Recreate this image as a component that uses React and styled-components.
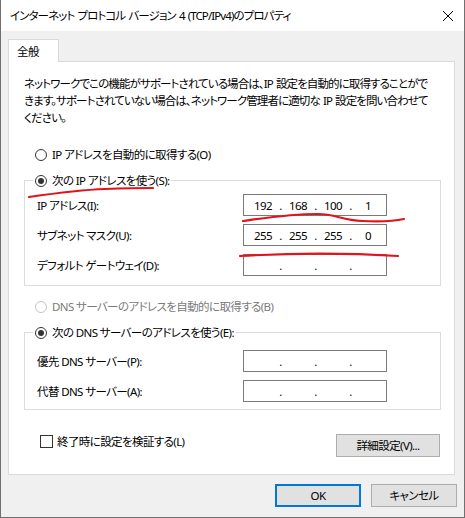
import React from 'react';
import styled, { createGlobalStyle } from 'styled-components';

const GlobalStyle = createGlobalStyle`
  html, body {
    margin: 0;
    padding: 0;
    background: #ffffff;
  }
  body {
    font-family: "Noto Sans", "Noto Sans CJK JP", sans-serif;
    font-size: 12px;
    color: #000;
  }
  * {
    box-sizing: border-box;
  }
`;

const FONT = `"Noto Sans", "Noto Sans CJK JP", sans-serif`;

const Window = styled.div`
  position: relative;
  width: 465px;
  height: 518px;
  display: flex;
  flex-direction: column;
  border-left: 1px solid #707070;
  border-right: 1px solid #707070;
  border-bottom: 1px solid #707070;
  background: #f0f0f0;
  font-family: ${FONT};
  font-size: 11.5px;
  letter-spacing: -0.6px;
  font-feature-settings: "palt";
`;

const TitleBar = styled.div`
  height: 31px;
  flex: none;
  display: flex;
  align-items: center;
  justify-content: space-between;
  padding: 0 5px 0 9px;
  background: #ffffff;
  line-height: 17px;
`;

const Title = styled.span`
  letter-spacing: -0.9px;
  word-spacing: 1px;
  white-space: nowrap;
`;

const CloseButton = styled.div`
  width: 22px;
  height: 22px;
  display: flex;
  align-items: center;
  justify-content: center;
`;

const Body = styled.div`
  flex: 1;
  display: flex;
  flex-direction: column;
  padding: 8px 9px 0 7px;
`;

const TabStrip = styled.div`
  display: flex;
  position: relative;
  z-index: 1;
  margin-bottom: -1px;
`;

const Tab = styled.div`
  height: 23px;
  padding: 0 8px;
  width: 51px;
  display: flex;
  align-items: center;
  background: #ffffff;
  border: 1px solid #d9d9d9;
  border-bottom: none;
  line-height: 17px;
`;

const Panel = styled.div`
  height: 414px;
  display: flex;
  flex-direction: column;
  background: #ffffff;
  border: 1px solid #d9d9d9;
  padding: 13px 13px 0 15px;
`;

const Intro = styled.p`
  margin: 0;
  line-height: 17px;
  letter-spacing: -0.9px;
  word-spacing: 1px;
  white-space: nowrap;
`;

const RadioRow = styled.label`
  display: flex;
  align-items: center;
  height: 17px;
  line-height: 17px;
  gap: 5px;
  margin-top: ${p => p.$top || 0}px;
  margin-left: ${p => (p.$legend ? 0 : 11)}px;
  color: ${p => (p.$disabled ? '#7a7a7a' : '#000')};
  white-space: nowrap;
`;

const RadioDot = styled.span`
  width: 12px;
  height: 12px;
  flex: none;
  border-radius: 50%;
  border: 1px solid ${p => (p.$disabled ? '#c4c4c4' : '#333')};
  background: #fff;
  display: flex;
  align-items: center;
  justify-content: center;

  &::after {
    content: '';
    display: ${p => (p.$checked ? 'block' : 'none')};
    width: 6px;
    height: 6px;
    border-radius: 50%;
    background: #333;
  }
`;

const Group = styled.fieldset`
  margin: ${p => p.$top}px 0 0 0;
  border: 1px solid #dcdcdc;
  padding: ${p => p.$padTop}px 53px ${p => p.$padBottom}px 12px;
  display: flex;
  flex-direction: column;
  gap: 8px;
  min-width: 0;
`;

const Legend = styled.legend`
  margin-left: -4px;
  padding: 0 2px;
`;

const FieldRow = styled.div`
  display: flex;
  align-items: center;
  height: 22px;
`;

const FieldLabel = styled.span`
  width: 206px;
  line-height: 17px;
  white-space: nowrap;
`;

const IpBox = styled.div`
  width: 144px;
  height: 22px;
  border: 1px solid #7a7a7a;
  background: #fff;
  display: grid;
  grid-template-columns: 26px 9px 26px 9px 26px 9px 26px;
  align-items: center;
  padding-left: 6px;
  line-height: 17px;
`;

const Octet = styled.span`
  text-align: center;
`;

const Dot = styled.span`
  text-align: center;
`;

const Footer = styled.div`
  display: flex;
  align-items: center;
  justify-content: space-between;
  margin-top: 23px;
  padding: 0 1px 0 16px;
`;

const CheckRow = styled.label`
  display: flex;
  align-items: center;
  gap: 4px;
  line-height: 17px;
  margin-bottom: 8px;
`;

const CheckBox = styled.span`
  width: 13px;
  height: 13px;
  border: 1px solid #333;
  background: #fff;
`;

const Button = styled.button`
  font-family: ${FONT};
  font-size: 11.5px;
  letter-spacing: -0.6px;
  font-feature-settings: "palt";
  color: #000;
  width: ${p => p.$width}px;
  height: 23px;
  padding: 0;
  background: #e1e1e1;
  border: ${p => (p.$default ? '2px solid #0078d7' : '1px solid #adadad')};
  line-height: 17px;
`;

const ButtonBar = styled.div`
  display: flex;
  justify-content: flex-end;
  gap: 10px;
  margin-top: 9px;
  margin-right: -2px;
`;

const Marks = styled.svg`
  position: absolute;
  left: -1px;
  top: 0;
  pointer-events: none;
`;

const ipRows = [
  { label: 'IP アドレス(I):', value: ['192', '168', '100', '1'] },
  { label: 'サブネット マスク(U):', value: ['255', '255', '255', '0'] },
  { label: 'デフォルト ゲートウェイ(D):', value: ['', '', '', ''] },
];

const dnsRows = [
  { label: '優先 DNS サーバー(P):', value: ['', '', '', ''] },
  { label: '代替 DNS サーバー(A):', value: ['', '', '', ''] },
];

const IpField = ({ value }) => (
  <IpBox>
    <Octet>{value[0]}</Octet>
    <Dot>.</Dot>
    <Octet>{value[1]}</Octet>
    <Dot>.</Dot>
    <Octet>{value[2]}</Octet>
    <Dot>.</Dot>
    <Octet>{value[3]}</Octet>
  </IpBox>
);

const Radio = ({ children, checked, disabled, legend, top }) => (
  <RadioRow $legend={legend} $disabled={disabled} $top={top}>
    <RadioDot $checked={checked} $disabled={disabled} />
    {children}
  </RadioRow>
);

const App = () => {
  return (
    <>
      <GlobalStyle />
      <Window>
        <TitleBar>
          <Title>インターネット プロトコル バージョン 4 (TCP/IPv4)のプロパティ</Title>
          <CloseButton>
            <svg width="12" height="12" viewBox="0 0 12 12">
              <path d="M1 1 L11 11 M11 1 L1 11" stroke="#000" strokeWidth="1" />
            </svg>
          </CloseButton>
        </TitleBar>

        <Body>
          <TabStrip>
            <Tab>全般</Tab>
          </TabStrip>

          <Panel>
            <Intro>
              ネットワークでこの機能がサポートされている場合は、IP 設定を自動的に取得することがで
              <br />
              きます。サポートされていない場合は、ネットワーク管理者に適切な IP 設定を問い合わせて
              <br />
              ください。
            </Intro>

            <Radio top={20}>IP アドレスを自動的に取得する(O)</Radio>

            <Group $top={9} $padTop={5} $padBottom={9}>
              <Legend>
                <Radio checked legend>次の IP アドレスを使う(S):</Radio>
              </Legend>
              {ipRows.map(row => (
                <FieldRow key={row.label}>
                  <FieldLabel>{row.label}</FieldLabel>
                  <IpField value={row.value} />
                </FieldRow>
              ))}
            </Group>

            <Radio disabled top={12}>DNS サーバーのアドレスを自動的に取得する(B)</Radio>

            <Group $top={9} $padTop={9} $padBottom={7}>
              <Legend>
                <Radio checked legend>次の DNS サーバーのアドレスを使う(E):</Radio>
              </Legend>
              {dnsRows.map(row => (
                <FieldRow key={row.label}>
                  <FieldLabel>{row.label}</FieldLabel>
                  <IpField value={row.value} />
                </FieldRow>
              ))}
            </Group>

            <Footer>
              <CheckRow>
                <CheckBox />
                終了時に設定を検証する(L)
              </CheckRow>
              <Button $width={104}>詳細設定(V)...</Button>
            </Footer>
          </Panel>

          <ButtonBar>
            <Button $default $width={86}>OK</Button>
            <Button $width={86}>キャンセル</Button>
          </ButtonBar>
        </Body>

        {/* hand-drawn red annotation strokes */}
        <Marks width="465" height="518" viewBox="0 0 465 518">
          <g fill="none" stroke="#e3131b" strokeWidth="2.2" strokeLinecap="round">
            <path d="M29 197 C 50 194, 78 190, 105 189 S 140 188, 153 188" />
            <path d="M243 221 C 265 218, 290 214, 318 214 C 335 214, 342 220, 362 221 S 395 221, 404 219" />
            <path d="M240 256 C 290 253, 350 253, 398 256" />
          </g>
        </Marks>
      </Window>
    </>
  );
};

export default App;
